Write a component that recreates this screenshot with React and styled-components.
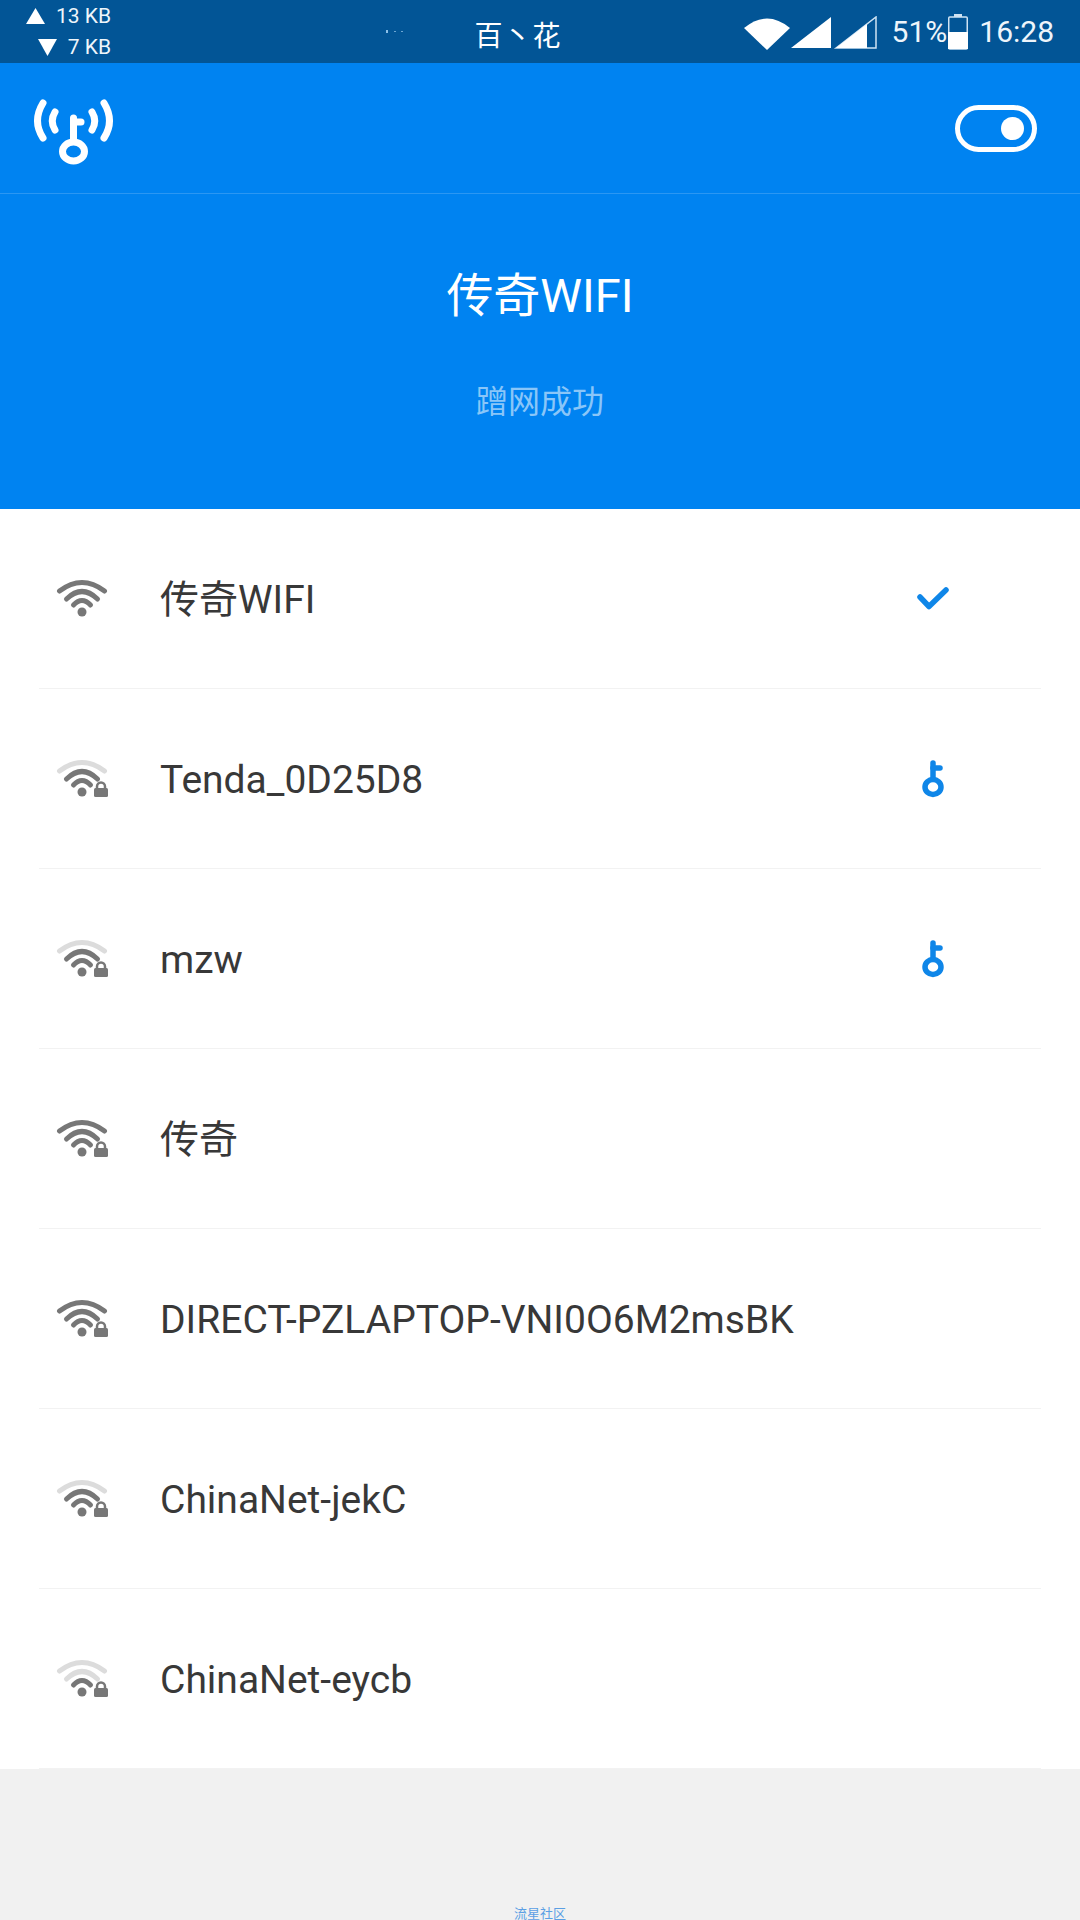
import React from 'react';
import styled, { createGlobalStyle } from 'styled-components';

const Global = createGlobalStyle`
  html, body { margin: 0; padding: 0; background: #f1f1f1; }
  body { font-family: Roboto, "Noto Sans CJK SC", sans-serif; }
`;

const Page = styled.div`
  width: 1080px;
  height: 1920px;
  display: flex;
  flex-direction: column;
  overflow: hidden;
  background: #f1f1f1;
`;

const StatusBar = styled.div`
  height: 63px;
  flex: none;
  background: #025596;
  color: #eef5fb;
  display: grid;
  grid-template-columns: 1fr auto 1fr;
  align-items: center;
  padding: 0 26px;
`;

const Speeds = styled.div`
  display: flex;
  flex-direction: column;
  align-items: flex-end;
  width: 85px;
  font-size: 21px;
  line-height: 31px;
`;

const Speed = styled.div`
  display: flex;
  align-items: center;
  gap: 11px;
  white-space: nowrap;
`;

const CarrierGroup = styled.div`
  display: flex;
  align-items: center;
  gap: 71px;
  margin-right: 132px;
`;

const Carrier = styled.div`
  font-size: 28px;
  letter-spacing: 1px;
  margin-top: 5px;
  color: #fff;
`;

const StatusRight = styled.div`
  display: flex;
  align-items: center;
  justify-content: flex-end;
  font-size: 30px;
`;

const Percent = styled.span`
  margin-left: 13px;
  margin-right: 1px;
`;

const Time = styled.span`
  margin-left: 11px;
`;

const Toolbar = styled.div`
  height: 131px;
  flex: none;
  background: #0083f1;
  border-bottom: 1px solid #2b97f3;
  box-sizing: border-box;
  display: flex;
  align-items: center;
  justify-content: space-between;
  padding: 0 43px 0 33px;
`;

const Switch = styled.div`
  width: 82px;
  height: 47px;
  box-sizing: border-box;
  border: 5px solid #fff;
  border-radius: 24px;
  display: flex;
  align-items: center;
  justify-content: flex-end;
  padding-right: 8px;
`;

const Knob = styled.div`
  width: 23px;
  height: 23px;
  border-radius: 50%;
  background: #fff;
`;

const Hero = styled.div`
  height: 315px;
  flex: none;
  background: #0083f1;
  display: flex;
  flex-direction: column;
  align-items: center;
`;

const HeroTitle = styled.div`
  margin-top: 74px;
  color: #fff;
  font-size: 47px;
  line-height: 56px;
`;

const HeroSub = styled.div`
  margin-top: 58px;
  color: #8ac6f8;
  font-size: 32px;
  line-height: 40px;
`;

const List = styled.div`
  background: #fff;
  flex: none;
`;

const Row = styled.div`
  height: 180px;
  box-sizing: border-box;
  margin: 0 39px;
  display: flex;
  align-items: center;
  border-bottom: 1px solid #f2f2f2;
`;

const SignalSlot = styled.div`
  width: 121px;
  flex: none;
  padding-left: 16px;
  box-sizing: border-box;
  display: flex;
`;

const Name = styled.div`
  flex: 1;
  color: #383838;
  font-size: 39px;
  line-height: 46px;
  margin-top: 3px;
`;

const Action = styled.div`
  width: 66px;
  margin-right: 75px;
  display: flex;
  justify-content: center;
`;

const Footer = styled.div`
  flex: 1;
  display: flex;
  justify-content: center;
  align-items: flex-end;
`;

const FooterText = styled.div`
  color: #5b9fe4;
  font-size: 13px;
  line-height: 16px;
  margin-bottom: -2px;
`;

const WHITE = '#fff';

const Logo = () => (
  <svg width="82" height="74" viewBox="0 0 82 74" fill="none" stroke={WHITE} strokeLinecap="round" strokeWidth="7">
    <path d="M10 12 Q-1 30 10 47" />
    <path d="M71 12 Q82 30 71 47" />
    <path d="M22 21 Q16.500 30 22 39" />
    <path d="M59 21 Q64.500 30 59 39" />
    <path d="M40.500 27 V50" />
    <path d="M41.500 31 H48" />
    <ellipse cx="40.500" cy="60.500" rx="11" ry="9.500" />
  </svg>
);

const ArrowUp = () => (
  <svg width="19" height="16" viewBox="0 0 19 16"><path d="M9.500 0 L19 16 H0 Z" fill={WHITE} /></svg>
);

const ArrowDown = () => (
  <svg width="19" height="17" viewBox="0 0 19 17"><path d="M0 0 H19 L9.500 17 Z" fill={WHITE} /></svg>
);

const Specks = () => (
  <svg width="17" height="3" viewBox="0 0 17 3">
    <rect x="0" y="0" width="2" height="3" fill="#8cc0e8" />
    <rect x="8" y="1" width="2" height="1" fill="#6da6d2" />
    <rect x="15" y="1" width="2" height="1" fill="#6da6d2" />
  </svg>
);

const StatusIcons = () => (
  <svg width="135" height="34" viewBox="0 0 135 34" style={{ marginTop: 2 }}>
    <path d="M0 12 Q23 -7 46 12 L23 34 Z" fill={WHITE} />
    <path d="M47 32 L87 1 V32 Z" fill={WHITE} />
    <path d="M92 32 L132 1 V32 Z" fill="none" stroke="#cfe3f3" strokeWidth="1.500" />
    <path d="M92 32 L123 8 V32 Z" fill={WHITE} />
  </svg>
);

const Battery = () => (
  <svg width="20" height="36" viewBox="0 0 20 36">
    <path d="M6 0 H14 V3 H6 Z" fill="#cfe3f3" />
    <rect x="0.750" y="3" width="18.500" height="32" rx="1" fill="none" stroke="#cfe3f3" strokeWidth="1.500" />
    <rect x="0" y="18" width="20" height="17" fill={WHITE} />
  </svg>
);

const GRAY = '#777';
const FAINT = '#dcdcdc';

// level: how many of the arcs are dark
const Signal = ({ level, locked }) => {
  const arc = (n) => (level >= n ? GRAY : FAINT);
  return (
    <svg width="54" height="40" viewBox="0 0 54 40" fill="none" strokeLinecap="round" strokeWidth="5">
      <path d="M4.500 12 Q27 -5 49.500 12" stroke={arc(3)} />
      <path d="M11.500 20 Q27 5 42.500 20" stroke={arc(2)} />
      <path d="M18.500 26 Q27 17 35.500 26" stroke={arc(1)} />
      <circle cx="27" cy="33" r="4.500" fill={GRAY} />
      {locked && (
        <g>
          <path d="M42 29 V27.500 A4 4 0 0 1 50 27.500 V29" stroke={GRAY} strokeWidth="2.500" />
          <rect x="39" y="29" width="14" height="9" rx="1.500" fill={GRAY} />
        </g>
      )}
    </svg>
  );
};

const Check = () => (
  <svg width="32" height="23" viewBox="0 0 32 23" fill="none" stroke="#0f86e8" strokeWidth="5.500" strokeLinecap="round" strokeLinejoin="round">
    <path d="M3 10 L12 19.500 L29 3" />
  </svg>
);

const Key = () => (
  <svg width="24" height="38" viewBox="0 0 24 38" fill="none" stroke="#0f86e8" strokeWidth="5.500" strokeLinecap="round">
    <path d="M12 3 V19" />
    <path d="M12 8 H19" />
    <ellipse cx="12" cy="27" rx="8" ry="7.500" />
  </svg>
);

const networks = [
  { name: '传奇WIFI', level: 3, locked: false, action: 'check' },
  { name: 'Tenda_0D25D8', level: 2, locked: true, action: 'key' },
  { name: 'mzw', level: 2, locked: true, action: 'key' },
  { name: '传奇', level: 3, locked: true },
  { name: 'DIRECT-PZLAPTOP-VNI0O6M2msBK', level: 3, locked: true },
  { name: 'ChinaNet-jekC', level: 2, locked: true },
  { name: 'ChinaNet-eycb', level: 1, locked: true },
];

export default function App() {
  return (
    <Page>
      <Global />
      <StatusBar>
        <Speeds>
          <Speed><ArrowUp />13 KB</Speed>
          <Speed><ArrowDown />7 KB</Speed>
        </Speeds>
        <CarrierGroup>
          <Specks />
          <Carrier>百丶花</Carrier>
        </CarrierGroup>
        <StatusRight>
          <StatusIcons />
          <Percent>51%</Percent>
          <Battery />
          <Time>16:28</Time>
        </StatusRight>
      </StatusBar>
      <Toolbar>
        <Logo />
        <Switch><Knob /></Switch>
      </Toolbar>
      <Hero>
        <HeroTitle>传奇WIFI</HeroTitle>
        <HeroSub>蹭网成功</HeroSub>
      </Hero>
      <List>
        {networks.map((n) => (
          <Row key={n.name}>
            <SignalSlot><Signal level={n.level} locked={n.locked} /></SignalSlot>
            <Name>{n.name}</Name>
            <Action>
              {n.action === 'check' && <Check />}
              {n.action === 'key' && <Key />}
            </Action>
          </Row>
        ))}
      </List>
      <Footer>
        <FooterText>流星社区</FooterText>
      </Footer>
    </Page>
  );
}
